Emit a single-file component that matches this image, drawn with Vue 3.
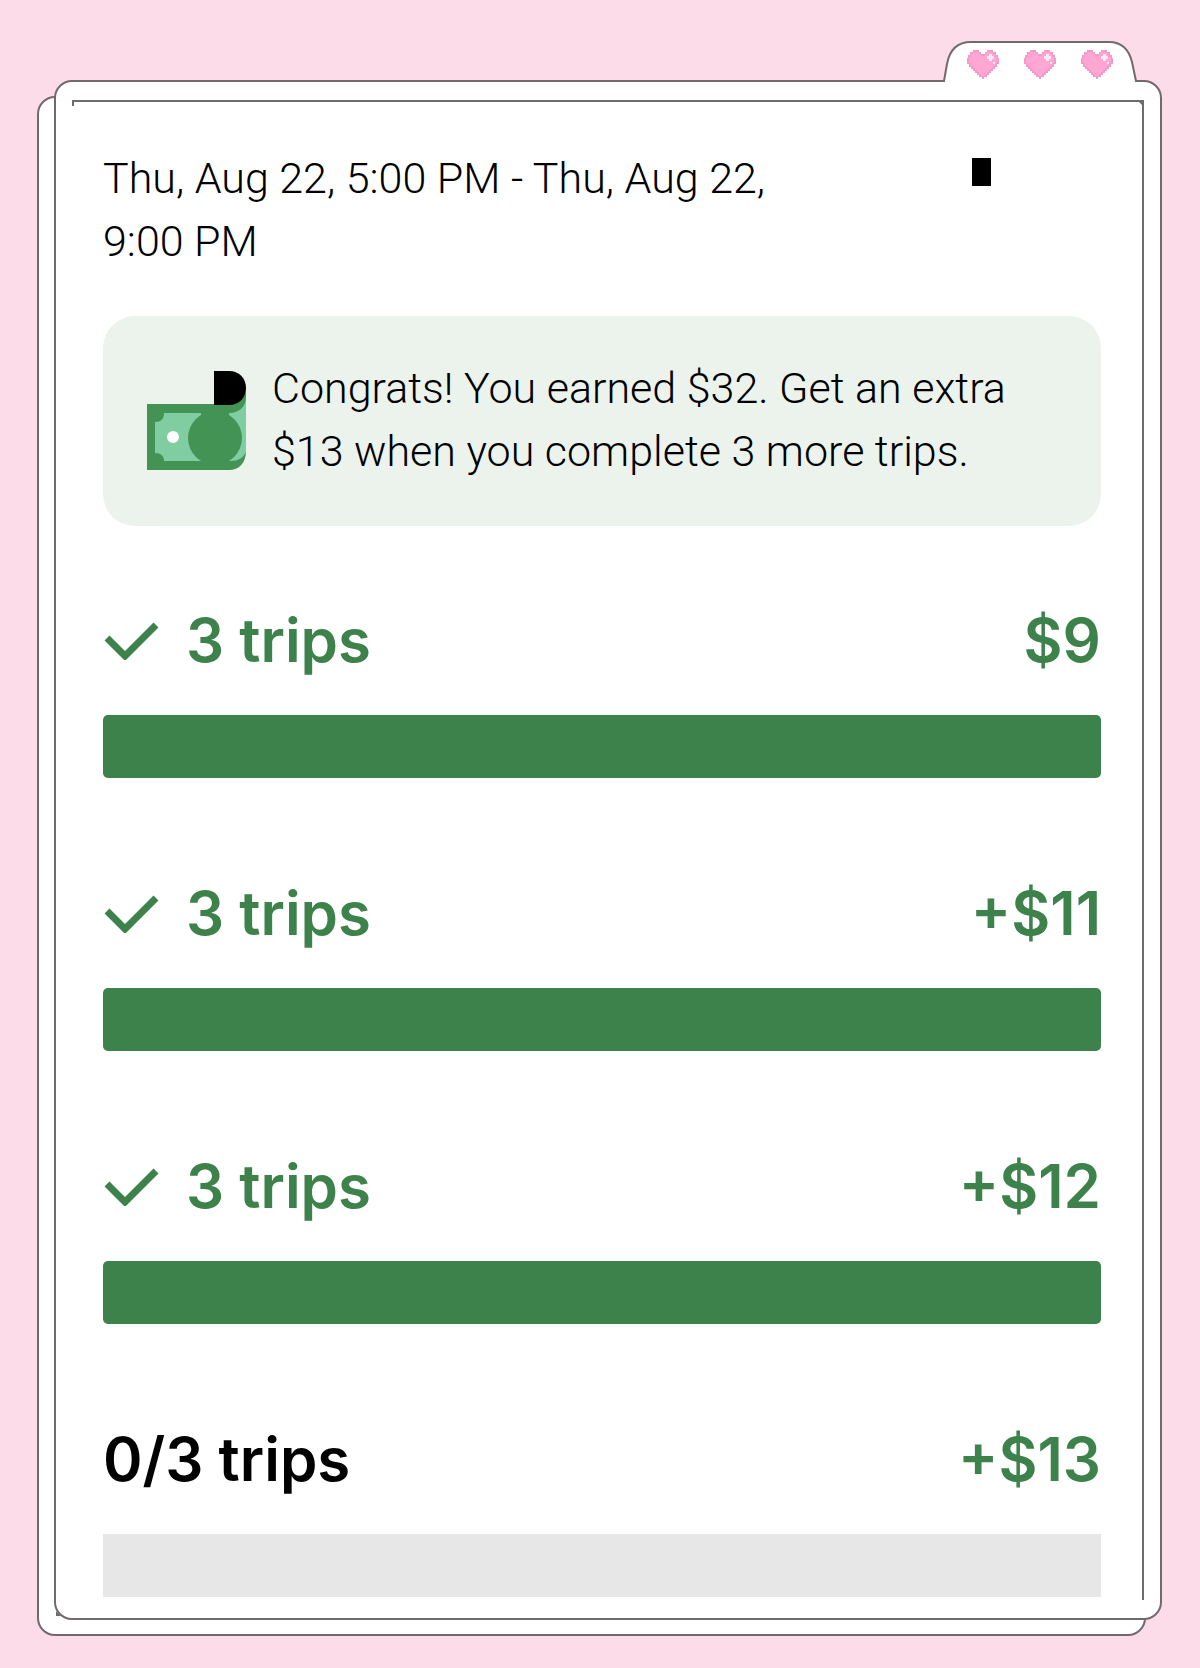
<script setup>
const tiers = [
  { label: '3 trips', reward: '$9', done: 3, goal: 3 },
  { label: '3 trips', reward: '+$11', done: 3, goal: 3 },
  { label: '3 trips', reward: '+$12', done: 3, goal: 3 },
  { label: '0/3 trips', reward: '+$13', done: 0, goal: 3 },
]

const hearts = [24, 81, 138]
</script>

<template>
  <main class="page">
    <div class="stack">
      <div class="sheet back"></div>
      <article class="sheet front">
        <svg class="tab" width="196" height="42" viewBox="0 0 196 42" aria-hidden="true">
          <path class="tab-fill" d="M1 42V41L4 24Q8 2 28 2H166Q184 2 189 22L193 41V42Z" />
          <path class="tab-line" d="M0 41H1L4 24Q8 2 28 2H166Q184 2 189 22L193 41H196" />
          <g v-for="x in hearts" :key="x" :transform="`translate(${x} 10)`">
            <path class="heart-edge" d="M6 0H12V2H14V4H18V2H20V0H26V2H29V5H31V8H32V14H30V17H28V19H26V21H24V23H22V25H20V27H17V29H15V27H12V25H10V23H8V21H6V19H4V17H2V14H0V8H1V5H3V2H6Z" />
            <path class="heart-fill" d="M6 2H12V4H14V6H18V4H20V2H26V4H28V7H30V13H28V16H26V18H24V20H22V22H20V24H18V26H14V24H12V22H10V20H8V18H6V16H4V13H2V7H4V4H6Z" />
            <path class="heart-glow" d="M22 4H25V6H27V9H25V11H22V9H20V6H22ZM26 12H28V14H26Z" />
          </g>
        </svg>
        <span class="rule top"></span>
        <span class="rule stub"></span>
        <span class="rule side"></span>
        <svg class="nick upper" width="5" height="5" viewBox="0 0 5 5" aria-hidden="true"><path d="M0 0H5V5Z" /></svg>
        <svg class="nick lower" width="5" height="5" viewBox="0 0 5 5" aria-hidden="true"><path d="M0 0L5 5H0Z" /></svg>

        <header class="heading">
          <h1 class="period">Thu, Aug 22, 5:00 PM - Thu, Aug 22, 9:00 PM</h1>
          <span class="marker"></span>
        </header>

        <section class="notice">
          <svg class="cash" width="99" height="99" viewBox="0 0 99 99" aria-hidden="true">
            <path fill="#429354" d="M0 33H82C92 33 99 27 99 17V80C99 92 92 99 82 99H0Z" />
            <path fill="#80cda1" d="M17 42H84C92 41 99 36 99 26V81C96 87 91 90 84 90H17C17 85 14 82 8 82V51C14 51 17 48 17 42Z" />
            <path fill="#429354" d="M54 42H82V90H54Z" />
            <circle cx="68" cy="67" r="27" fill="#429354" />
            <circle cx="26" cy="66" r="6" fill="#fff" />
            <path d="M67 0H82C92 0 99 7 99 17S92 34 82 34H67Z" />
          </svg>
          <p class="message">Congrats! You earned $32. Get an extra $13 when you complete 3 more trips.</p>
        </section>

        <ul class="tiers">
          <li v-for="(tier, i) in tiers" :key="i" class="tier" :class="{ complete: tier.done === tier.goal }">
            <div class="row">
              <svg v-if="tier.done === tier.goal" class="check" width="56" height="40" viewBox="0 0 56 40" aria-hidden="true">
                <path d="M4 18L22 36L53 5" />
              </svg>
              <h2 class="label">{{ tier.label }}</h2>
              <span class="reward">{{ tier.reward }}</span>
            </div>
            <div class="track">
              <div class="fill" :style="{ width: (tier.done / tier.goal) * 100 + '%' }"></div>
            </div>
          </li>
        </ul>
      </article>
    </div>
  </main>
</template>

<style>
body {
  background: #fbdce8;
}
</style>

<style scoped>
.page {
  padding: 80px 38px 32px 37px;
  font-family: "Inter", "Liberation Sans", sans-serif;
  color: #000;
}

.stack {
  position: relative;
  padding: 0 0 16px 17px;
}

.sheet {
  box-sizing: border-box;
  border: 2px solid #716a6d;
  border-radius: 18px;
  background: #fff;
}

.back {
  position: absolute;
  inset: 16px 16px 0 0;
}

.front {
  position: relative;
  padding: 53px 59px 21px 47px;
}

.tab {
  position: absolute;
  top: -42px;
  right: 21px;
}

.tab-fill {
  fill: #fff;
}

.tab-line {
  fill: none;
  stroke: #716a6d;
  stroke-width: 2;
}

.heart-edge {
  fill: #f798c6;
}

.heart-fill {
  fill: #ffa6d2;
}

.heart-glow {
  fill: #ffe9f4;
}

.rule {
  position: absolute;
  background: #716a6d;
}

.top {
  top: 18px;
  left: 16px;
  right: 16px;
  height: 2px;
}

.stub {
  top: 18px;
  left: 16px;
  width: 2px;
  height: 6px;
}

.side {
  top: 18px;
  right: 16px;
  bottom: 18px;
  width: 2px;
}

.nick {
  position: absolute;
  fill: #716a6d;
}

.upper {
  top: 19px;
  right: 17px;
}

.lower {
  bottom: 2px;
  left: 0;
}

.heading {
  display: flex;
  justify-content: space-between;
  align-items: flex-start;
  padding-top: 12px;
}

.period,
.message {
  margin: 0;
  font-family: "Roboto", "Liberation Sans", sans-serif;
  font-size: 43px;
  font-weight: 350;
  line-height: 63px;
}

.period {
  max-width: 720px;
}

.marker {
  width: 19px;
  height: 28px;
  margin: 11px 110px 0 0;
  background: #000;
}

.notice {
  display: flex;
  align-items: center;
  gap: 26px;
  margin-top: 43px;
  padding: 41px 44px 43px;
  border-radius: 32px;
  background: #ebf3ec;
}

.cash {
  flex: none;
}

.message {
  flex: 1;
}

.tiers {
  display: flex;
  flex-direction: column;
  gap: 99px;
  margin: 78px 0 0;
  padding: 0;
  list-style: none;
}

.row {
  display: flex;
  align-items: center;
  margin-bottom: 39px;
}

.check {
  flex: none;
  margin-right: 27px;
  fill: none;
  stroke: #3d824b;
  stroke-width: 7;
}

.label,
.reward {
  margin: 0;
  font-size: 60px;
  font-weight: 600;
  line-height: 72px;
}

.reward {
  margin-left: auto;
  color: #3d824b;
}

.complete .label {
  color: #3d824b;
}

.track {
  height: 63px;
  background: #e7e7e7;
}

.complete .track {
  border-radius: 5px;
  overflow: hidden;
}

.fill {
  height: 100%;
  background: #3d824b;
}
</style>
